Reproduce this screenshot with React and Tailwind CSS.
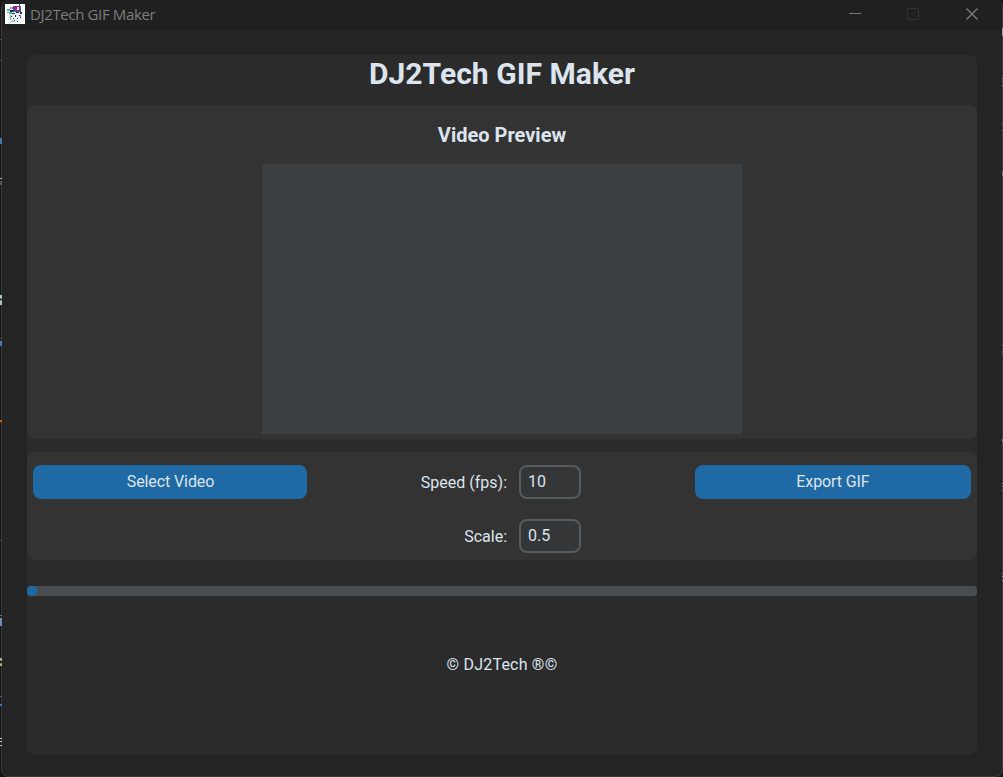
import { useState } from 'react'

// Slivers of the editor behind the window: [y, height, colour]
const LEFT_SLIVERS = [
  [39, 1, '#4a4a4a'], [60, 1, '#4a4a4a'], [138, 6, '#3b78b4'], [178, 1, '#b0b0b0'],
  [181, 4, '#555555'], [295, 3, '#9cc6dc'], [298, 1, '#b07830'], [300, 1, '#b07830'],
  [301, 4, '#9cc6dc'], [338, 1, '#704040'], [341, 5, '#5478b8'], [420, 2, '#c86414'],
  [423, 1, '#502020'], [540, 1, '#4a4a4a'], [615, 1, '#707070'], [618, 8, '#6c8cac'],
  [658, 2, '#8cb8c0'], [660, 1, '#b08030'], [663, 1, '#b08030'], [664, 2, '#8cb8c0'],
  [696, 1, '#5a5aa0'], [704, 2, '#3c70c0'], [738, 1, '#c8c8c8'], [741, 1, '#c8c8c8'],
  [745, 1, '#c8c8c8'],
]

const RIGHT_SLIVERS = [
  [28, 8, '#a0a0a0'], [78, 1, '#909090'], [81, 1, '#909090'], [85, 1, '#909090'],
  [123, 1, '#808080'], [130, 1, '#808080'], [171, 5, '#7a7a7a'], [345, 1, '#909090'],
  [351, 3, '#5a5a5a'], [439, 3, '#808080'], [444, 1, '#606060'],
  [483, 1, '#909090'], [486, 1, '#909090'], [490, 1, '#909090'],
  [573, 1, '#909090'], [576, 1, '#909090'], [580, 1, '#909090'],
]

function AppIcon() {
  return (
    <svg width="20" height="20" viewBox="0 0 20 20" shapeRendering="crispEdges">
      <rect width="20" height="20" fill="#ffffff" />
      <path d="M4 10l11-2 2 8-10 3-2-2z" fill="#e4edf3" />
      <path d="M2 5h3v2H2zM4 8h3v2H4z" fill="#35c794" />
      <path d="M5 3h3v2H5zM2 8h2v1H2z" fill="#d774c8" />
      <path d="M8 2h8v6H8zM14 0h1v2h-1z" fill="#1764bd" />
      <path d="M10 2h5v5h-5z" fill="#d51853" />
      <path d="M12 3h2v3h-2z" fill="#ffffff" />
      <path d="M5 6h3v2H5zM7 9h3v1H7zM11 8h3v1h-3zM15 8h2v2h-2z" fill="#22304c" />
      <path d="M6 12h1v1H6zM10 11h1v2h-1zM14 11h1v1h-1zM8 14h1v1H8zM12 14h1v1h-1zM15 13h1v1h-1zM9 16h1v1H9zM12 17h1v1h-1z" fill="#26333b" />
      <path d="M15 11h1v2h-1z" fill="#e65277" />
      <path d="M5 11h1v5H5zM6 17h3v1H6z" fill="#8facba" />
    </svg>
  )
}

function TitleBar() {
  return (
    <header className="flex h-[30px] items-center bg-[#202020] pl-[3px]">
      <div className="-mt-0.5 flex items-center gap-[5px]">
        <AppIcon />
        <span className="font-['Open_Sans',sans-serif] text-[15px] leading-5 tracking-[-0.36px] text-[#7d7d7d]">DJ2Tech GIF Maker</span>
      </div>
      <div className="-mt-0.5 ml-auto flex items-center pr-6">
        <svg width="12" height="12" shapeRendering="crispEdges">
          <path d="M0 5.5h12" stroke="#7a7a7a" />
        </svg>
        <svg className="ml-[46px]" width="12" height="12" fill="none">
          <rect x="0.5" y="0.5" width="11" height="11" rx="1" stroke="#343434" />
        </svg>
        <svg className="ml-[47px]" width="12" height="12" fill="none">
          <path d="M0.5 0.5l11 11M11.5 0.5l-11 11" stroke="#858585" strokeWidth="1.1" />
        </svg>
      </div>
    </header>
  )
}

function Field({ label, value, onChange }) {
  return (
    <label className="flex h-[34px] items-center justify-end gap-3">
      <span className="pt-0.5">{label}</span>
      <input
        value={value}
        onChange={e => onChange(e.target.value)}
        className="h-[34px] w-[62px] rounded-lg border-2 border-[#565b5e] bg-[#343638] pb-0.5 pl-[7px] outline-none"
      />
    </label>
  )
}

function Slivers({ items, side }) {
  return (
    <svg className={`absolute top-0 ${side === 'left' ? 'left-0' : 'right-0'}`} width={side === 'left' ? 2 : 1} height="777" shapeRendering="crispEdges">
      {items.map(([y, h, fill]) => (
        <rect key={y} y={y} width="2" height={h} fill={fill} />
      ))}
    </svg>
  )
}

export default function App() {
  const [fps, setFps]     = useState('10')
  const [scale, setScale] = useState('0.5')

  return (
    <div className="relative h-[777px] w-[1003px] bg-[#151515] pl-px font-[Roboto,sans-serif] text-base text-[#dce4ee]">
      <div className="flex h-full flex-col overflow-hidden rounded-lg border-x border-b border-[#3a3a3a] bg-[#242424]">
        <TitleBar />

        <main className="mx-[25px] mt-[25px] h-[700px] rounded-lg bg-[#2b2b2b]">
          <h1 className="h-[50px] pt-px text-center text-[30px] leading-9 font-bold tracking-[0.05px]">DJ2Tech GIF Maker</h1>

          {/* Preview */}
          <section className="flex h-[334px] flex-col items-center rounded-lg bg-[#333333] pt-[18px]">
            <h2 className="h-[41px] text-xl leading-6 font-bold">Video Preview</h2>
            <div className="h-[270px] w-[480px] bg-[#3c3f41]" />
          </section>

          {/* Controls */}
          <section className="mt-[13px] flex h-[108px] items-start rounded-lg bg-[#333333] px-1.5 pt-[13px]">
            <button className="h-[34px] w-[274px] rounded-lg bg-[#1f6aa5] pl-px tracking-[-0.1px]">Select Video</button>
            <div className="flex w-[274px] flex-col gap-5">
              <Field label="Speed (fps):" value={fps} onChange={setFps} />
              <Field label="Scale:" value={scale} onChange={setScale} />
            </div>
            <button className="ml-auto h-[34px] w-[276px] rounded-lg bg-[#1f6aa5] tracking-[-0.1px]">Export GIF</button>
          </section>

          {/* Progress */}
          <div className="mt-[26px] h-2.5 overflow-hidden rounded-[4px] bg-[#4a4d50]">
            <div className="size-2.5 rounded-[4px] bg-[#1f6aa5]" />
          </div>

          <footer className="mt-[57px] text-center leading-6 tracking-[0.2px]">© DJ2Tech ®©</footer>
        </main>
      </div>

      <Slivers items={LEFT_SLIVERS} side="left" />
      <Slivers items={RIGHT_SLIVERS} side="right" />
    </div>
  )
}
